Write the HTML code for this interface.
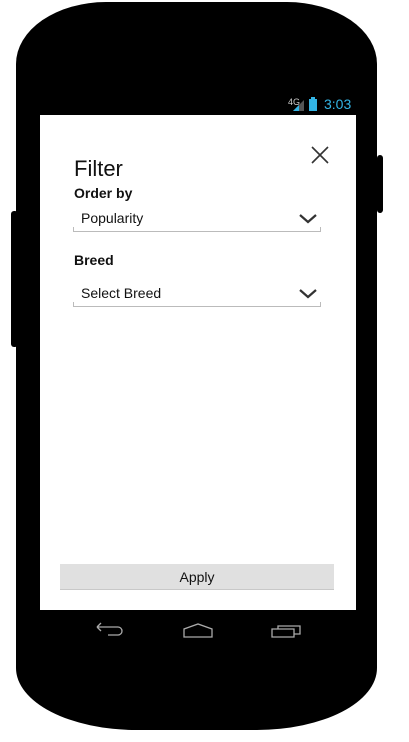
<!DOCTYPE html>
<html><head><style>
*{margin:0;padding:0;box-sizing:border-box}
body{width:409px;height:742px;background:#fff;position:relative;overflow:hidden;font-family:"Liberation Sans",sans-serif}
.phone{position:absolute;left:16px;top:2px;width:361px;height:728px;background:#000;border-radius:90px 90px 120px 120px / 62px 62px 62px 62px}
.btn{position:absolute;background:#000;border-radius:3px}
.screen{position:absolute;left:40px;top:115px;width:316px;height:495px;background:#fff}
.t{position:absolute;color:#111;white-space:nowrap}
.field{position:absolute;left:33px;width:248px;height:5px;border:1px solid #bbb;border-top:none}
</style></head><body>
<div class="btn" style="left:377px;top:155px;width:6px;height:58px"></div>
<div class="btn" style="left:11px;top:211px;width:7px;height:136px"></div>
<div class="phone"></div>
<div class="t" style="left:288px;top:97px;font-size:9px;color:#ccc">4G</div>
<svg style="position:absolute;left:293px;top:98px" width="14" height="14"><polygon points="0,13 11,2 11,13" fill="#555"/><polygon points="0,13 6,7 6,13" fill="#33b5e5"/></svg>
<div style="position:absolute;left:309px;top:99px;width:8px;height:12px;background:#33b5e5"></div>
<div style="position:absolute;left:311px;top:97px;width:4px;height:2px;background:#33b5e5"></div>
<div class="t" style="left:324px;top:96px;font-size:14px;color:#33b5e5">3:03</div>
<div class="screen">
<div class="t" style="left:34px;top:41px;font-size:22px">Filter</div>
<svg style="position:absolute;left:271px;top:31px" width="18" height="18"><path d="M1,1L17,17M17,1L1,17" stroke="#333" stroke-width="1.6"/></svg>
<div class="t" style="left:34px;top:70px;font-size:14px;font-weight:bold">Order by</div>
<div class="t" style="left:41px;top:95px;font-size:14px">Popularity</div>
<svg style="position:absolute;left:259px;top:99px" width="18" height="10"><path d="M1,1L9,8L17,1" stroke="#333" stroke-width="2.2" fill="none"/></svg>
<div class="field" style="top:112px"></div>
<div class="t" style="left:34px;top:137px;font-size:14px;font-weight:bold">Breed</div>
<div class="t" style="left:41px;top:170px;font-size:14px">Select Breed</div>
<svg style="position:absolute;left:259px;top:174px" width="18" height="10"><path d="M1,1L9,8L17,1" stroke="#333" stroke-width="2.2" fill="none"/></svg>
<div class="field" style="top:187px"></div>
<div style="position:absolute;left:20px;top:449px;width:274px;height:26px;background:#e0e0e0;border-bottom:1px solid #c8c8c8;text-align:center;font-size:14px;line-height:26px;color:#111">Apply</div>
</div>
<svg style="position:absolute;left:94px;top:622px" width="220" height="20" fill="none" stroke="#aaa" stroke-width="1.3">
<path d="M3,5H24A4,4 0 0 1 24,13H14M3,5L7,1M3,5L7,9"/>
<path d="M90,15V7L104,2L118,7V15Z"/>
<path d="M178,7H200V15H178Z M184,7V4H206V12H200"/>
</svg>
</body></html>
